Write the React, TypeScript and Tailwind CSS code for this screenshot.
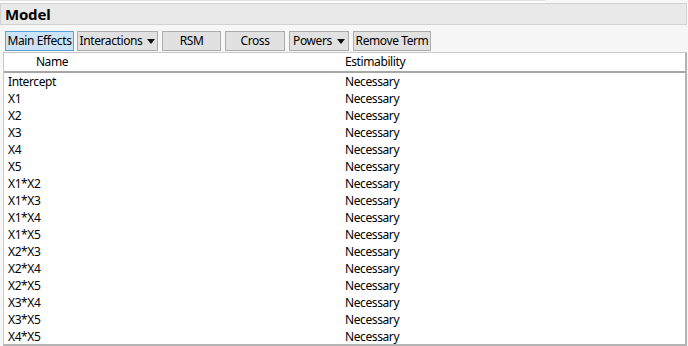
const terms = [
  'Intercept',
  'X1',
  'X2',
  'X3',
  'X4',
  'X5',
  'X1*X2',
  'X1*X3',
  'X1*X4',
  'X1*X5',
  'X2*X3',
  'X2*X4',
  'X2*X5',
  'X3*X4',
  'X3*X5',
  'X4*X5',
]

function Caret() {
  return (
    <svg width="8" height="5" viewBox="0 0 8 5" className="ml-[5px] shrink-0">
      <path d="M0 0 H8 L4 5 Z" fill="#111" />
    </svg>
  )
}

const btn =
  'h-[20px] bg-[#e1e1e1] border border-[#adadad] flex items-center justify-center leading-none whitespace-nowrap'

export default function App() {
  return (
    <div
      className="w-[688px] h-[346px] bg-[#f7f7f7] text-black text-[12px] tracking-[-0.4px] overflow-hidden whitespace-nowrap"
      style={{ fontFamily: '"Noto Sans", "Open Sans", sans-serif' }}
    >
      <div className="h-[3px] w-[545px] border-t border-[#e2e2e2] bg-white" />
      <div className="h-[22px] w-[687px] bg-[#e9e9e9] border border-[#d2d2d2] flex items-center pl-[4px]">
        <span className="text-[15px] font-bold leading-none tracking-[-0.2px]">Model</span>
      </div>

      <div className="flex pl-[5px] pt-[6px] h-[27px]">
        <button className="w-[69px] h-[20px] bg-[#cce4f7] border border-[#5ba3d9] flex items-center justify-center leading-none whitespace-nowrap">
          Main Effects
        </button>
        <button className={`w-[81px] ml-[3px] ${btn}`}>
          Interactions
          <Caret />
        </button>
        <button className={`w-[59px] ml-[4px] ${btn}`}>RSM</button>
        <button className={`w-[60px] ml-[4px] ${btn}`}>Cross</button>
        <button className={`w-[60px] ml-[4px] ${btn}`}>
          Powers
          <Caret />
        </button>
        <button className={`w-[78px] ml-[4px] ${btn}`}>Remove Term</button>
      </div>

      <div className="ml-[3px] w-[684px] h-[294px] bg-white border border-[#c8c8c8] border-r-2 border-b-2 border-r-[#b4b4b4] border-b-[#b4b4b4]">
        <div className="flex h-[20px] items-center border-b-2 border-[#a6a6a6]">
          <div className="w-[96px] text-center">Name</div>
          <div className="ml-[245px]">Estimability</div>
        </div>
        {terms.map((t) => (
          <div key={t} className="flex h-[17px] items-center">
            <div className="w-[341px] pl-[4px]">{t}</div>
            <div>Necessary</div>
          </div>
        ))}
      </div>
    </div>
  )
}
